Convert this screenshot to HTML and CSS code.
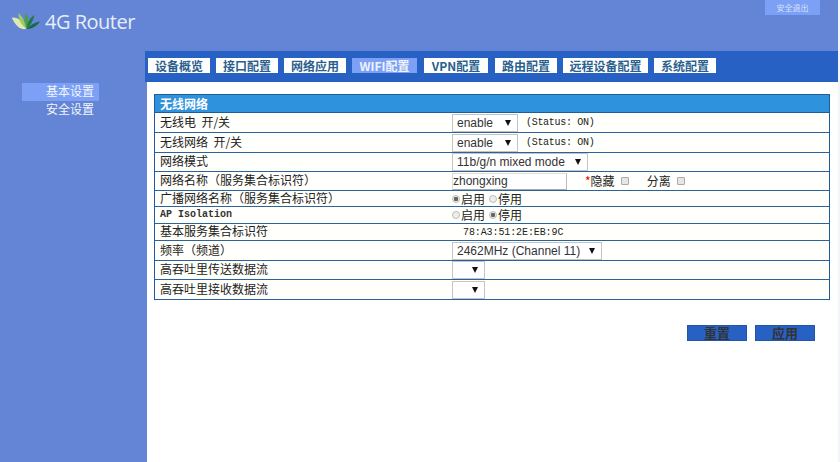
FILE: index.html
```html
<!DOCTYPE html>
<html lang="zh">
<head>
<meta charset="utf-8">
<title>4G Router</title>
<link rel="stylesheet" href="styles.css">
</head>
<body>
<div class="page">
  <header class="top">
    <div class="brand">
      <svg class="logo" width="30" height="17" viewBox="0 0 30 18">
        <path d="M0 5C6 4 12 9 15 17C8 18 3 12 0 5Z" fill="#dfe8ae"/>
        <path d="M7 0C11 3 14 9 15 16C10 13 7 7 7 0Z" fill="#9ccb62"/>
        <path d="M15 0C18 5 18 11 16 17C13 11 13 5 15 0Z" fill="#4c9f3c"/>
        <path d="M24 2C23 7 20 13 16 17C16 10 19 5 24 2Z" fill="#1f7a44"/>
        <path d="M30 9C26 14 21 17 16 17C19 13 24 10 30 9Z" fill="#17694a"/>
      </svg>
      <span class="brand-name">4G Router</span>
    </div>
    <a class="logout">安全退出</a>
  </header>
  <div class="body">
    <aside class="side">
      <a class="side-item active">基本设置</a>
      <a class="side-item">安全设置</a>
    </aside>
    <main class="main">
      <nav class="nav">
        <a class="tab">设备概览</a>
        <a class="tab">接口配置</a>
        <a class="tab">网络应用</a>
        <a class="tab active wifi">WIFI配置</a>
        <a class="tab vpn">VPN配置</a>
        <a class="tab">路由配置</a>
        <a class="tab remote">远程设备配置</a>
        <a class="tab">系统配置</a>
      </nav>
      <section class="panel">
        <div class="form">
          <div class="title">无线网络</div>
          <div class="row h20">
            <div class="label">无线电&nbsp;&nbsp;开/关</div>
            <div class="value"><span class="sel w66">enable</span><span class="status">(Status: ON)</span></div>
          </div>
          <div class="row h20">
            <div class="label">无线网络&nbsp;&nbsp;开/关</div>
            <div class="value"><span class="sel w66">enable</span><span class="status">(Status: ON)</span></div>
          </div>
          <div class="row h19">
            <div class="label">网络模式</div>
            <div class="value"><span class="sel w136">11b/g/n mixed mode</span></div>
          </div>
          <div class="row h19">
            <div class="label">网络名称（服务集合标识符）</div>
            <div class="value">
              <input class="ssid" type="text" value="zhongxing">
              <span class="req">*</span><span class="opt">隐藏</span><span class="box"></span>
              <span class="opt sep">分离</span><span class="box"></span>
            </div>
          </div>
          <div class="row h16">
            <div class="label">广播网络名称（服务集合标识符）</div>
            <div class="value"><span class="radio on"></span><span class="opt">启用</span><span class="radio gap"></span><span class="opt">停用</span></div>
          </div>
          <div class="row h17">
            <div class="label mono">AP Isolation</div>
            <div class="value"><span class="radio"></span><span class="opt">启用</span><span class="radio on gap"></span><span class="opt">停用</span></div>
          </div>
          <div class="row h17">
            <div class="label">基本服务集合标识符</div>
            <div class="value mac">78:A3:51:2E:EB:9C</div>
          </div>
          <div class="row h20">
            <div class="label">频率（频道）</div>
            <div class="value"><span class="sel w150">2462MHz (Channel 11)</span></div>
          </div>
          <div class="row h19">
            <div class="label">高吞吐里传送数据流</div>
            <div class="value"><span class="sel w33"></span></div>
          </div>
          <div class="row h20">
            <div class="label">高吞吐里接收数据流</div>
            <div class="value"><span class="sel w33"></span></div>
          </div>
        </div>
        <div class="actions">
          <button class="btn" type="button">重置</button>
          <button class="btn" type="button">应用</button>
        </div>
      </section>
    </main>
  </div>
</div>
</body>
</html>
```
FILE: styles.css
```css
* { box-sizing: border-box; }
html, body { margin: 0; padding: 0; }
html { background: #f4f5f8; }
body {
  width: 840px; height: 462px; overflow: hidden;
  font-family: "Noto Sans CJK SC", "Liberation Sans", sans-serif;
  color: #222;
}
.page { display: flex; flex-direction: column; width: 838px; height: 462px; background: #6485d5; }
.top { display: flex; justify-content: space-between; align-items: flex-start; height: 51px; padding: 0 18px 0 11px; }
.brand { display: flex; align-items: center; gap: 4px; margin-top: 9px; height: 24px; }
.logo { display: block; }
.brand-name { font-family: "Open Sans", sans-serif; font-size: 20px; color: #e6eef8; letter-spacing: -0.5px; }
.logout { width: 55px; height: 15px; background: #7ba0f5; color: #d8e4fa; font-size: 8px; line-height: 15px; text-align: center; }
.body { display: flex; flex: 1; min-height: 0; }
.side { width: 145px; display: flex; flex-direction: column; padding: 32px 0 0 22px; }
.side-item { width: 77px; height: 18px; padding-left: 24px; font-size: 12px; line-height: 16px; color: #f2f5fc; }
.side-item.active { background: #7ba0f5; }
.main { width: 693px; display: flex; flex-direction: column; }
.nav { height: 31px; background: #2861c4; display: flex; align-items: flex-start; gap: 6px; padding: 7px 0 0 3px; }
.tab { height: 15px; width: 62px; background: #fff; color: #2b5f8e; font-size: 12px; font-weight: 700; line-height: 15px; text-align: center; white-space: nowrap; }
.tab.active { background: #7ba0f5; color: #eef3fd; }
.tab.wifi { width: 65px; margin-right: 1px; }
.tab.vpn { width: 64px; margin-right: 1px; }
.tab.remote { width: 85px; }
.panel { flex: 1; margin-left: 2px; background: #fff; padding: 12px 8px 0 7px; }
.form { width: 676px; border: 1px solid #1f5c9c; border-bottom: 0; background: #fffffb; font-size: 12px; }
.title { height: 18px; padding-left: 5px; background: #2f92dc; color: #fff; font-size: 12px; font-weight: 700; line-height: 17px; border-bottom: 1px solid #1f5c9c; }
.row { display: grid; grid-template-columns: 296px 1fr; border-bottom: 1px solid #2a62a0; white-space: nowrap; }
.label { padding: 0 0 2px 5px; line-height: 14px; align-self: center; }
.value { display: flex; align-items: center; padding-left: 1px; min-height: 0; overflow: hidden; }
.h16 { height: 16px; } .h17 { height: 17px; } .h19 { height: 19px; } .h20 { height: 20px; }
.mono, .status, .mac { font-family: "Liberation Mono", monospace; }
.label.mono { padding-bottom: 0; font-size: 10px; font-weight: 700; color: #333; }
.sel { display: block; flex: none; position: relative; height: 18px; padding-left: 4px; background: #fff; border: 1px solid #c4c4c4; font-family: "Liberation Sans", sans-serif; font-size: 12px; line-height: 16px; color: #333; }
.sel::after { content: ""; position: absolute; right: 6px; top: 5px; border: 3.5px solid transparent; border-top: 6px solid #111; border-bottom: 0; }
.w33 { width: 33px; } .w66 { width: 66px; } .w136 { width: 136px; } .w150 { width: 150px; }
.status { margin-left: 8px; font-size: 10px; letter-spacing: -0.3px; color: #222; }
.ssid { flex: none; width: 115px; height: 17px; padding: 0; border: 1px solid #ddd; border-right-color: #bbb; border-bottom-color: #aaa; font-family: "Liberation Sans", sans-serif; font-size: 12px; color: #333; outline: 0; }
.req { margin-left: 18px; padding-bottom: 2px; color: #d00; font-size: 12px; }
.opt { padding-bottom: 2px; font-size: 12px; }
.sep { margin-left: 18px; }
.box { width: 8px; height: 8px; margin-left: 6px; background: #e6e6e6; border: 1px solid #aaa; border-radius: 1px; }
.radio { flex: none; width: 8px; height: 8px; border-radius: 50%; margin-right: 1px; background: #eee; border: 1px solid #bbb; }
.radio.on { background: radial-gradient(circle, #666 0 2px, #eee 2.5px); }
.gap { margin-left: 4px; }
.value.mac { font-size: 10px; letter-spacing: -0.1px; padding-left: 12px; color: #222; }
.actions { display: flex; justify-content: flex-end; gap: 8px; margin: 25px 15px 0 0; }
.btn { width: 60px; height: 16px; padding: 0; background: #2861c4; border: 1px solid #2455a8; color: #333; font-family: "Noto Sans CJK SC", sans-serif; font-size: 13px; font-weight: 700; line-height: 14px; }
```
